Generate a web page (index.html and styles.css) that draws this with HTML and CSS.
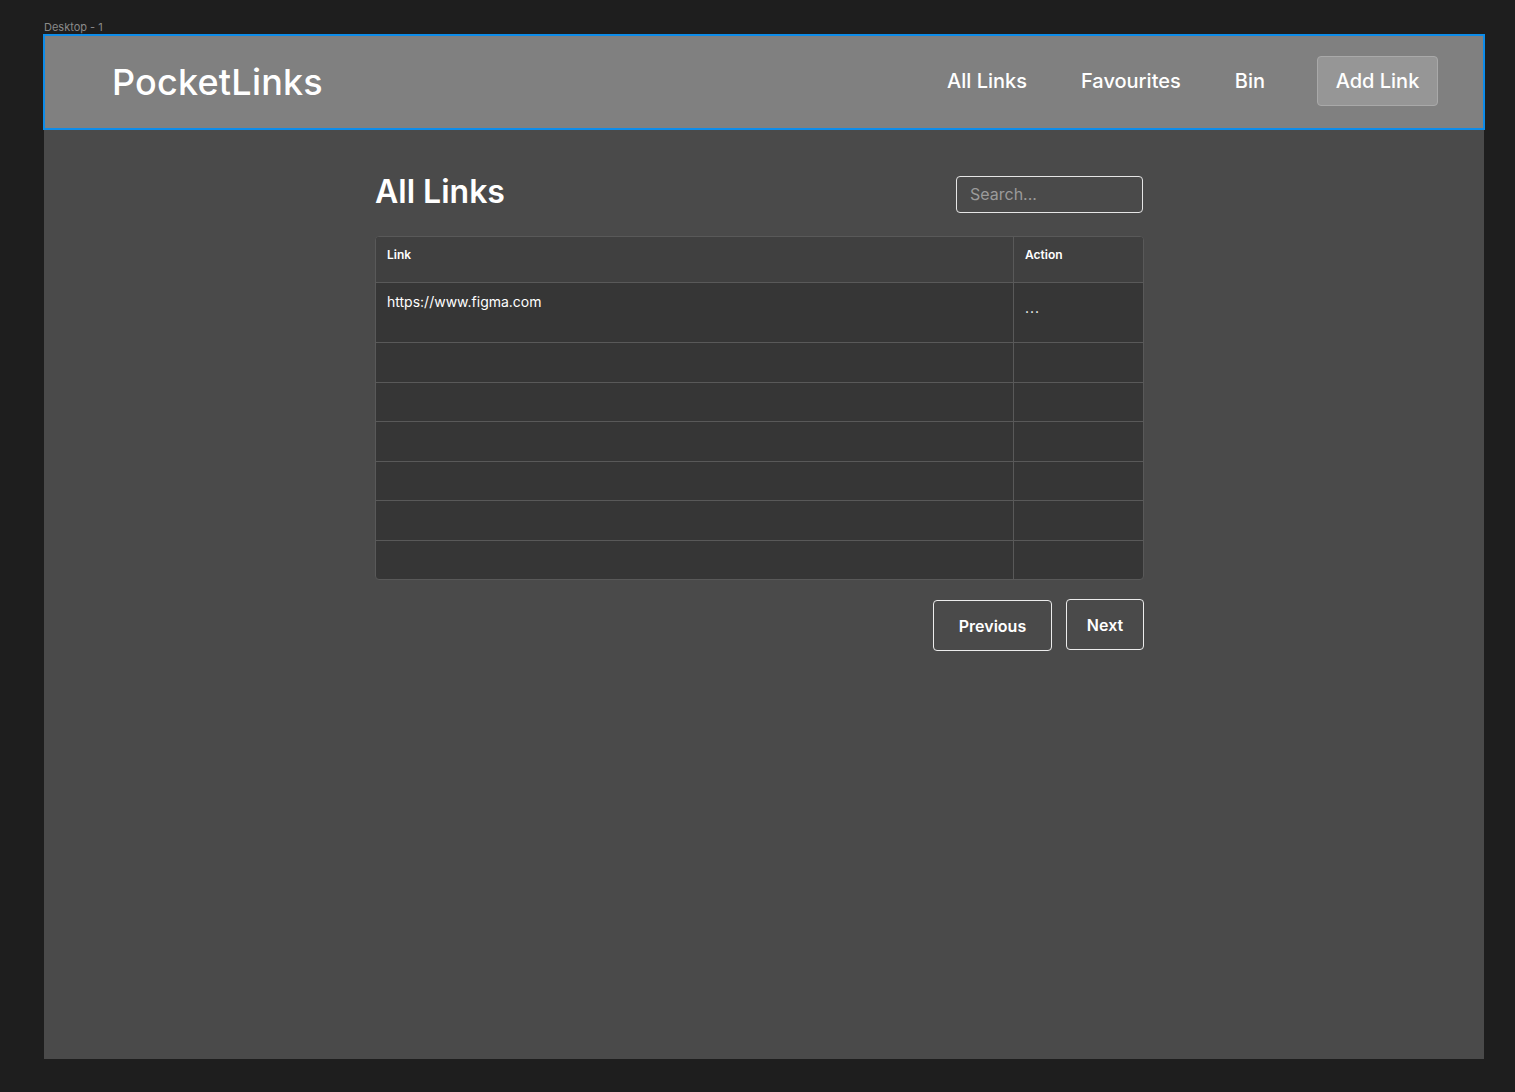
FILE: index.html
```html
<!DOCTYPE html>
<html lang="en">
<head>
<meta charset="utf-8">
<title>PocketLinks</title>
<link rel="stylesheet" href="styles.css">
</head>
<body>
<div class="canvas">
  <div class="frame-label">Desktop - 1</div>
  <div class="frame">
    <header class="header">
      <div class="logo">PocketLinks</div>
      <nav class="nav">
        <a class="nav-link">All Links</a>
        <a class="nav-link">Favourites</a>
        <a class="nav-link">Bin</a>
        <a class="nav-btn">Add Link</a>
      </nav>
    </header>
    <main class="content">
      <div class="title-row">
        <h1 class="title">All Links</h1>
        <div class="search">Search...</div>
      </div>
      <div class="table">
        <div class="row head">
          <div class="cell link">Link</div>
          <div class="cell action">Action</div>
        </div>
        <div class="row first">
          <div class="cell link">https://www.figma.com</div>
          <div class="cell action dots">...</div>
        </div>
        <div class="row"><div class="cell link"></div><div class="cell action"></div></div>
        <div class="row"><div class="cell link"></div><div class="cell action"></div></div>
        <div class="row"><div class="cell link"></div><div class="cell action"></div></div>
        <div class="row"><div class="cell link"></div><div class="cell action"></div></div>
        <div class="row"><div class="cell link"></div><div class="cell action"></div></div>
        <div class="row"><div class="cell link"></div><div class="cell action"></div></div>
      </div>
      <div class="pager">
        <button class="pbtn prev">Previous</button>
        <button class="pbtn next">Next</button>
      </div>
    </main>
  </div>
</div>
</body>
</html>
```

FILE: styles.css
```css
* { box-sizing: border-box; }
html, body { margin: 0; padding: 0; }
body {
  background: #1e1e1e;
  font-family: Inter, "Noto Sans", sans-serif;
  color: #ffffff;
  width: 1515px;
  height: 1092px;
  overflow: hidden;
}
.canvas {
  padding: 20px 0 0 44px;
}
.frame-label {
  font-size: 11px;
  line-height: 14px;
  color: #8a8a8a;
  height: 15px;
}
.frame {
  width: 1440px;
  height: 1024px;
  background: #4a4a4a;
}
.header {
  height: 94px;
  background: #808080;
  outline: 2px solid #0d8ce9;
  outline-offset: -1px;
  display: flex;
  align-items: center;
  justify-content: space-between;
  padding: 0 46px 0 68px;
}
.logo {
  font-size: 36px;
  font-weight: 500;
  letter-spacing: 0.2px;
  margin-top: -1px;
}
.nav {
  display: flex;
  align-items: center;
  gap: 54px;
  margin-top: -2px;
}
.nav-link {
  font-size: 20px;
  font-weight: 500;
  color: #fff;
}
.nav-btn {
  font-size: 20px;
  font-weight: 500;
  color: #fff;
  background: #969696;
  border: 1px solid #a9a9a9;
  border-radius: 4px;
  height: 50px;
  width: 121px;
  display: flex;
  align-items: center;
  justify-content: center;
  margin-left: -2px;
}
.content {
  width: 769px;
  margin-left: 331px;
  padding-top: 47px;
}
.title-row {
  display: flex;
  justify-content: space-between;
  align-items: flex-start;
  height: 60px;
}
.title {
  margin: -4px 0 0 0;
  font-size: 32px;
  font-weight: 600;
  line-height: 40px;
}
.search {
  width: 187px;
  height: 37px;
  border: 1px solid #e6e6e6;
  border-radius: 4px;
  font-size: 16px;
  color: #9b9b9b;
  padding-left: 13px;
  line-height: 35px;
  margin-right: 1px;
}
.table {
  border: 1px solid #595959;
  border-radius: 4px;
  overflow: hidden;
  width: 769px;
  background: #363636;
}
.row {
  display: flex;
  height: 39.5px;
  border-top: 1px solid #595959;
}
.row.head {
  border-top: none;
  height: 45px;
  background: #404040;
}
.row.first {
  height: 60px;
}
.cell {
  padding: 10px 11px;
  font-size: 14px;
  line-height: 18px;
}
.cell.link {
  flex: 1;
  border-right: 1px solid #595959;
}
.cell.action {
  width: 129px;
  padding-left: 11px;
}
.head .cell {
  font-size: 12px;
  font-weight: 600;
  padding-top: 9px;
}
.first .cell.link { padding-top: 10px; }
.dots {
  padding-top: 16px;
  letter-spacing: 1px;
}
.pager {
  display: flex;
  justify-content: flex-end;
  gap: 14px;
  margin-top: 20px;
}
.pbtn {
  font-family: Inter, "Noto Sans", sans-serif;
  font-size: 16px;
  font-weight: 600;
  color: #fff;
  background: transparent;
  border: 1px solid #ececec;
  border-radius: 4px;
  height: 51px;
  padding: 0;
}
.pbtn.prev { width: 119px; margin-left: 1px; }
.pbtn.next { width: 78px; margin-top: -1px; }
```
